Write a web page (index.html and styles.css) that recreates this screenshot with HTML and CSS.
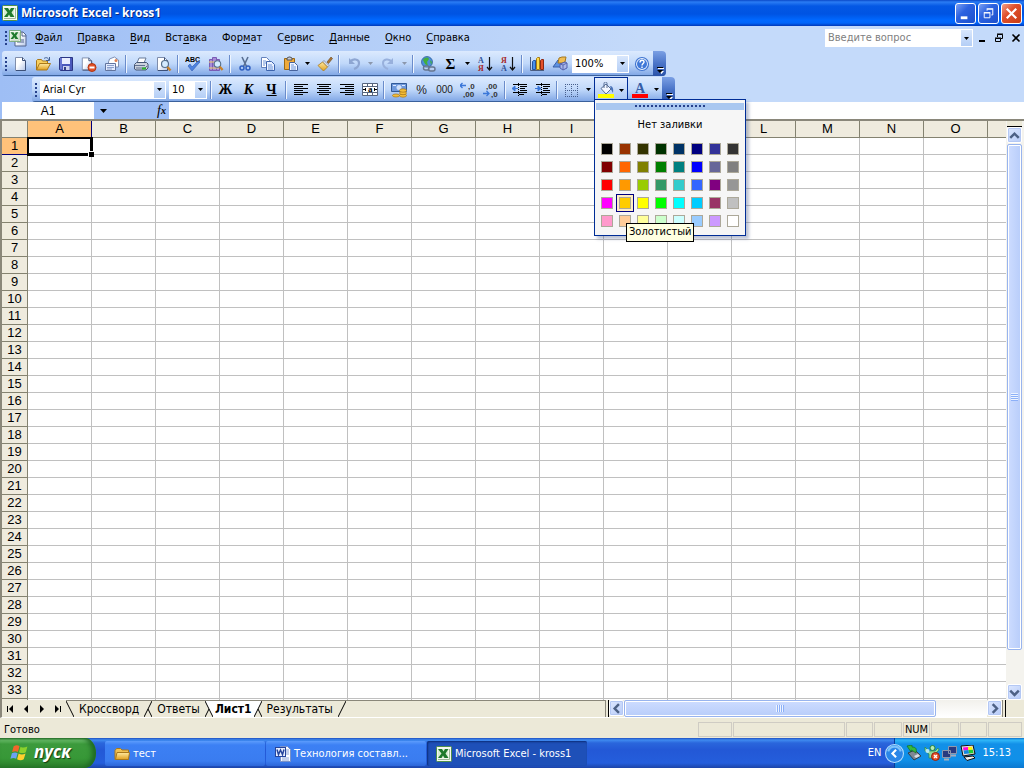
FILE: index.html
```html
<!DOCTYPE html>
<html lang="ru">
<head>
<meta charset="utf-8">
<title>Microsoft Excel - kross1</title>
<link rel="stylesheet" href="styles.css">
</head>
<body>
<svg class="defs" aria-hidden="true">
  <defs>
    <linearGradient id="pageFill" x1="0" y1="0" x2="1" y2="1"><stop offset="0.4" stop-color="#fff"/><stop offset="1" stop-color="#b4c6e8"/></linearGradient>
    <linearGradient id="gold" x1="0" y1="0" x2="0" y2="1"><stop offset="0" stop-color="#ffe9a0"/><stop offset="1" stop-color="#e0a020"/></linearGradient>
  </defs>
  <symbol id="excel" viewBox="0 0 16 16"><rect x="0.5" y="0.5" width="15" height="15" rx="1" fill="#f4faf0" stroke="#4f8f4a"/><path d="M2 13.500H13.500V3" fill="none" stroke="#9cb898"/><rect x="2" y="3" width="10" height="9" fill="#d8ecd2"/><path d="M2 3h4l1.500 2.500L9 3h3.500L9.500 7.500 12.500 12H8.500L7 9.500 5.500 12H2l3.500-4.500z" fill="#1f7a2c"/></symbol>
  <symbol id="page" viewBox="0 0 16 16"><path d="M3.500 1.500h7l3 3v10h-10z" fill="url(#pageFill)" stroke="#7f8dab"/><path d="M10.500 1.500v3h3M13.500 5v9.500H4" fill="none" stroke="#3c5078"/></symbol>
  <symbol id="lens" viewBox="0 0 16 16"><circle cx="9" cy="8" r="3.500" fill="#d4ebff" stroke="#56708c" stroke-width="1.200"/><path d="M11.500 11l3 3.500" stroke="#c98227" stroke-width="2.400"/></symbol>
  <symbol id="folder" viewBox="0 0 16 16"><path d="M1 4.500L2.500 2.500h4L8 4h6.500v9.500H1z" fill="#f0c050" stroke="#a8781c"/><path d="M1.500 13.500L3 6.500h12.500l-1 7z" fill="url(#gold)" stroke="#a8781c"/></symbol>
  <symbol id="down" viewBox="0 0 5 3"><path d="M0 0h5L2.500 3z"/></symbol>
</svg>
<div class="app">
  <header class="title">
    <svg class="i16"><use href="#excel"/></svg>
    <h1>Microsoft Excel - kross1</h1>
    <button class="win" aria-label="Свернуть"><svg viewBox="0 0 20 20"><path d="M5 13h7v3H5z" fill="#fff"/></svg></button>
    <button class="win" aria-label="Восстановить"><svg viewBox="0 0 20 20" fill="none" stroke="#fff"><path d="M8.500 7V5.500h6v6H13M8 5h7" /><path d="M5.500 9.500h6v5h-6zM5 9h7"/></svg></button>
    <button class="win close" aria-label="Закрыть"><svg viewBox="0 0 20 20"><path d="M5 5l10 10M15 5L5 15" stroke="#fff" stroke-width="2.300"/></svg></button>
  </header>

  <nav class="menu">
    <i class="grip"></i>
    <svg class="book" viewBox="0 0 18 18"><path d="M6 3h8l3 3v11H6z" fill="url(#pageFill)" stroke="#52658d"/><path d="M13 3v4h4M8 11h7M8 13h7" fill="none" stroke="#52658d"/><use href="#excel" x="0" y="1" width="12" height="12"/></svg>
    <button><u>Ф</u>айл</button><button><u>П</u>равка</button><button><u>В</u>ид</button><button>Вст<u>а</u>вка</button><button>Фор<u>м</u>ат</button><button>С<u>е</u>рвис</button><button><u>Д</u>анные</button><button><u>О</u>кно</button><button><u>С</u>правка</button>
    <div class="combo ask"><input aria-label="Введите вопрос" placeholder="Введите вопрос"><button aria-label="Список"><svg class="arr"><use href="#down"/></svg></button></div>
    <button class="doc" aria-label="Свернуть книгу"><svg viewBox="0 0 10 10"><path d="M2 7h6v2H2z"/></svg></button>
    <button class="doc" aria-label="Восстановить книгу"><svg viewBox="0 0 10 10" fill="none" stroke="#000"><path d="M3.500 4V1.500h5v4H7M3 1h6M1.500 5.500h5v3h-5zM1 5h6"/></svg></button>
    <button class="doc" aria-label="Закрыть книгу"><svg viewBox="0 0 10 10"><path d="M1.500 1.500l7 7M8.500 1.500l-7 7" stroke="#000" stroke-width="1.600"/></svg></button>
  </nav>

  <div class="row1"><div class="bar" role="toolbar" aria-label="Стандартная">
    <i class="grip"></i>
    <button class="tb" aria-label="Создать"><svg class="i16"><use href="#page"/></svg></button>
    <button class="tb" aria-label="Открыть"><svg viewBox="0 0 16 16"><path d="M1.500 14V4.500l1-1h4l1 1.500h5V8" fill="#f8d060" stroke="#a9781a"/><path d="M1.500 14L4.500 7.500h11L12 14z" fill="url(#gold)" stroke="#a9781a"/><path d="M9 2.500c2-1.500 4-1 5 1.500M14.500 1v3.500H11" fill="none" stroke="#415f94"/></svg></button>
    <button class="tb" aria-label="Сохранить"><svg viewBox="0 0 16 16"><path d="M1.500 2.500l1-1h12v13h-12l-1-1z" fill="#4a58bc" stroke="#2b3684"/><path d="M4 2h8v6H4z" fill="#e8edff"/><path d="M5 10h6.500v4H5z" fill="#cbd3ee"/><path d="M6 11h2v3H6z" fill="#333d84"/><path d="M3 2v11" stroke="#8a96e8"/></svg></button>
    <button class="tb" aria-label="Разрешение"><svg viewBox="0 0 16 16"><use href="#page" x="-2" y="0" width="15" height="16"/><circle cx="11" cy="11.500" r="4" fill="#e25128" stroke="#b03410"/><path d="M8.500 11.500h5" stroke="#fff" stroke-width="2"/></svg></button>
    <button class="tb" aria-label="Сообщение"><svg viewBox="0 0 16 16"><path d="M4.500 6l1-3 5-2 4 3v7h-10z" fill="#fff" stroke="#8090b4"/><circle cx="12" cy="4.500" r="1.500" fill="#e08050"/><path d="M1.500 7.500h10v7h-10z" fill="#e4ecff" stroke="#61749e"/><path d="M3 9.500h7M3 11.500h7M3 13h5" stroke="#8ba0cc"/></svg></button>
    <i class="sep"></i>
    <button class="tb" aria-label="Печать"><svg viewBox="0 0 16 16"><path d="M4 7l2-5h7l-2 5" fill="#fff" stroke="#687a98"/><path d="M1.500 8.500l2-2h10l1.500 1.500v4l-2 2h-10l-1.500-1z" fill="#cbd2de" stroke="#465674"/><path d="M2 9.500h10M3 12h9l2-2" stroke="#627290" fill="none"/><path d="M9 11.500h4v2H9z" fill="#2db52d"/></svg></button>
    <button class="tb" aria-label="Просмотр"><svg viewBox="0 0 16 16"><use href="#page" x="-2" width="16" height="16"/><use href="#lens" x="0" y="0" width="16" height="16"/></svg></button>
    <i class="sep"></i>
    <button class="tb" aria-label="Орфография"><svg viewBox="0 0 16 16"><text x="0" y="6" class="abc">ABC</text><path d="M3 10l4 5 8-9-2-1-6 6-2-3z" fill="#4d82e0" stroke="#305bb0" stroke-width=".6"/></svg></button>
    <button class="tb" aria-label="Справочные материалы"><svg viewBox="0 0 16 16"><path d="M1.500 3.500h3v11h-3zM4.500 1.500h4v13h-4zM8.500 3.500h3v11h-3z" fill="#a78bd8" stroke="#7a5cb4"/><path d="M1 6h10M1 12h10" stroke="#efd26e"/><use href="#lens" x="1" y="0" width="15" height="16"/></svg></button>
    <i class="sep"></i>
    <button class="tb" aria-label="Вырезать"><svg viewBox="0 0 16 16" fill="none"><path d="M5 1l4.500 9.500M11 1L6.500 10.500" stroke="#5a6f92" stroke-width="1.600"/><circle cx="5" cy="12" r="2" stroke="#2f5fc0" stroke-width="1.500"/><circle cx="11" cy="12" r="2" stroke="#2f5fc0" stroke-width="1.500"/></svg></button>
    <button class="tb" aria-label="Копировать"><svg viewBox="0 0 16 16"><path d="M1.500 1.500h5l3 3v7h-8z" fill="#fff" stroke="#6583bd"/><path d="M6.500 5.500h5l3 3v6h-8z" fill="#e8f0ff" stroke="#3d64ad"/><path d="M3 5h3M3 7h3M3 9h2M8 9h4M8 11h5M8 13h5" stroke="#6c94d8"/></svg></button>
    <button class="tb" aria-label="Вставить"><svg viewBox="0 0 16 16"><path d="M1.500 2.500h10v11h-10z" fill="#efaa3c" stroke="#9c6a14"/><path d="M4 4V2l2-1h1l2 1v2z" fill="#c8ccd8" stroke="#555"/><path d="M6.500 6.500h5l3 3v5h-8z" fill="#f2f6ff" stroke="#47639d"/><path d="M8 9h3M8 11h5M8 13h5" stroke="#6c94d8"/></svg></button>
    <button class="dd" aria-label="Параметры вставки"><svg class="arr"><use href="#down"/></svg></button>
    <button class="tb" aria-label="Формат по образцу"><svg viewBox="0 0 16 16"><path d="M10 6l4-5 1.500 1.500-4 5z" fill="#a87436" stroke="#6c4717" stroke-width=".6"/><path d="M7 4.500l5 5-1.500 1.500-5-5z" fill="#d9dde8" stroke="#687087" stroke-width=".6"/><path d="M5.500 6l5 5-4 4L1 9.500z" fill="url(#gold)" stroke="#a97a1b" stroke-width=".8"/></svg></button>
    <i class="sep"></i>
    <button class="tb" aria-label="Отменить"><svg viewBox="0 0 16 16" fill="none" stroke="#8ea6d2"><path d="M4 6c3-4 9-3 9 1 0 3-2 5-5 6" stroke-width="2.200"/><path d="M3 2v6h6z" fill="#8ea6d2" stroke="none"/></svg></button>
    <button class="dd gray" aria-label="Список отмены"><svg class="arr"><use href="#down"/></svg></button>
    <button class="tb" aria-label="Вернуть"><svg viewBox="0 0 16 16" fill="none" stroke="#98b0dc"><path d="M12 6C9 2 3 3 3 7c0 3 2 5 5 6" stroke-width="2"/><path d="M13 2v6H7z" fill="#98b0dc" stroke="none"/></svg></button>
    <button class="dd gray" aria-label="Список возврата"><svg class="arr"><use href="#down"/></svg></button>
    <i class="sep"></i>
    <button class="tb" aria-label="Гиперссылка"><svg viewBox="0 0 16 16"><circle cx="7" cy="6" r="5.500" fill="#4c8fdd" stroke="#28568e" stroke-width=".7"/><path d="M3 4c2-3 5-3 6-1L7 6l1 4-3-2zM10 4l2 2-1 3z" fill="#43ae3c"/><g fill="#dce4f2" fill-opacity=".4" stroke="#66758f" stroke-width="1.400"><rect x="3.500" y="10" width="6" height="4" rx="2"/><rect x="8.500" y="11" width="6.500" height="4" rx="2"/></g></svg></button>
    <button class="tb sigma" aria-label="Автосумма">Σ</button>
    <button class="dd" aria-label="Функции"><svg class="arr"><use href="#down"/></svg></button>
    <button class="tb" aria-label="По возрастанию"><svg viewBox="0 0 16 16"><text x="1" y="7" class="az blue">А</text><text x="1" y="15" class="az red">Я</text><path d="M12.500 1v13M10 11l2.500 3 2.500-3" fill="none" stroke="#111" stroke-width="1.200"/></svg></button>
    <button class="tb" aria-label="По убыванию"><svg viewBox="0 0 16 16"><text x="1" y="7" class="az red">Я</text><text x="1" y="15" class="az blue">А</text><path d="M12.500 1v13M10 11l2.500 3 2.500-3" fill="none" stroke="#111" stroke-width="1.200"/></svg></button>
    <i class="sep"></i>
    <button class="tb" aria-label="Диаграмма"><svg viewBox="0 0 16 16"><path d="M1.500 1v13.500H15" fill="none" stroke="#4a5c80"/><path d="M3.500 5.500l1-1h2v9h-3z" fill="#4a90ea" stroke="#2454a0"/><path d="M7.500 2.500l1-1h2v12h-3z" fill="#ffdc48" stroke="#a77b13"/><path d="M11.500 4.500l1-1h2v10h-3z" fill="#e4512c" stroke="#8c2812"/></svg></button>
    <button class="tb" aria-label="Рисование"><svg viewBox="0 0 16 16"><path d="M1 11L6 4l5 7z" fill="#5e91e0" stroke="#3860a8"/><path d="M7 2l3-1h4l-1 5-3 1H6z" fill="#f0bd54" stroke="#a47820"/><path d="M8 8l5-2 2 1v5l-4 2-3-2z" fill="#a9b7ea" stroke="#515fae"/><path d="M8 8l3 1 4-2M11 9v5" fill="none" stroke="#5b68b0"/></svg></button>
    <div class="combo zoom"><input aria-label="Масштаб" value="100%"><button aria-label="Список масштабов"><svg class="arr"><use href="#down"/></svg></button></div>
    <button class="tb" aria-label="Справка"><svg viewBox="0 0 16 16"><circle cx="8" cy="8" r="6.500" fill="#eef5ff" stroke="#3e73d0" stroke-width="1.200"/><circle cx="8" cy="8" r="5" fill="#3f78d8"/><path d="M6 6.500c0-3 4-3 4-.5 0 1.500-2 1.500-2 3.500M8 10.500v1.500" fill="none" stroke="#fff" stroke-width="1.400"/></svg></button>
    <button class="end" aria-label="Параметры панели"><svg viewBox="0 0 7 7"><path d="M1 1h6v1H1zM2 4h5L4.500 7z" fill="#fff"/><path d="M0 0h6v1H0zM0 3h6L3 6z"/></svg></button>
  </div></div>

  <div class="row2"><div class="bar" role="toolbar" aria-label="Форматирование">
    <i class="grip"></i>
    <div class="combo font"><input aria-label="Шрифт" value="Arial Cyr"><button aria-label="Список шрифтов"><svg class="arr"><use href="#down"/></svg></button></div>
    <div class="combo size"><input aria-label="Размер" value="10"><button aria-label="Список размеров"><svg class="arr"><use href="#down"/></svg></button></div>
    <i class="sep"></i>
    <button class="tb serif">Ж</button><button class="tb serif it">К</button><button class="tb serif un">Ч</button>
    <i class="sep"></i>
    <button class="tb" aria-label="По левому краю"><svg viewBox="0 0 16 16"><path d="M1 2.500h14M1 4.500h9M1 6.500h14M1 8.500h9M1 10.500h14M1 12.500h9" stroke="#000"/></svg></button>
    <button class="tb" aria-label="По центру"><svg viewBox="0 0 16 16"><path d="M1 2.500h14M3 4.500h10M1 6.500h14M3 8.500h10M1 10.500h14M3 12.500h10" stroke="#000"/></svg></button>
    <button class="tb" aria-label="По правому краю"><svg viewBox="0 0 16 16"><path d="M1 2.500h14M6 4.500h9M1 6.500h14M6 8.500h9M1 10.500h14M6 12.500h9" stroke="#000"/></svg></button>
    <button class="tb" aria-label="Объединить"><svg viewBox="0 0 16 16"><path d="M.5 1.500h15v12H.5zM.5 4.500h15M.5 10.500h15M5.500 1.500v3M10.500 1.500v3M5.500 10.500v3M10.500 10.500v3" fill="#fff" stroke="#56657e"/><path d="M1 7.500h3M12 7.500h3M3.500 6v3M12.500 6v3" stroke="#000"/><text x="6" y="10" class="mrg">a</text></svg></button>
    <i class="sep"></i>
    <button class="tb" aria-label="Денежный формат"><svg viewBox="0 0 16 16"><path d="M.5 1.500h15v8H.5z" fill="#6f99dc" stroke="#315998"/><circle cx="8" cy="5.500" r="2.500" fill="#cfe0fb"/><path d="M2 3.500h3M11 3.500h3" stroke="#dce8ff"/><g fill="#f4bd37" stroke="#a67417" stroke-width=".7"><ellipse cx="12" cy="13.500" rx="3.500" ry="1.700"/><ellipse cx="12" cy="11" rx="3.500" ry="1.700"/><ellipse cx="12" cy="8.500" rx="3.500" ry="1.700"/><ellipse cx="5" cy="13.500" rx="3.500" ry="1.500"/></g></svg></button>
    <button class="tb num pct">%</button>
    <button class="tb num">000</button>
    <button class="tb" aria-label="Увеличить разрядность"><svg viewBox="0 0 16 16"><text x="8" y="7" class="dec">,0</text><text x="3" y="15" class="dec">,00</text><path d="M6 3.500H0M2.500 1L0 3.500 2.500 6" stroke="#3a76d8" stroke-width="1.300" fill="none"/></svg></button>
    <button class="tb" aria-label="Уменьшить разрядность"><svg viewBox="0 0 16 16"><text x="3" y="7" class="dec">,00</text><text x="8" y="15" class="dec">,0</text><path d="M0 11.500h6M3.500 9L6 11.500 3.500 14" stroke="#3a76d8" stroke-width="1.300" fill="none"/></svg></button>
    <i class="sep"></i>
    <button class="tb" aria-label="Уменьшить отступ"><svg viewBox="0 0 16 16"><path d="M1 2.500h14M8 4.500h7M8 6.500h5M8 8.500h7M1 10.500h14M7 12.500h5" stroke="#000"/><path d="M6.500 1v14" stroke="#000" stroke-dasharray="1 1"/><path d="M0 6.500L3 4v5zM3 6.500h3" fill="#3a76d8" stroke="#3a76d8"/></svg></button>
    <button class="tb" aria-label="Увеличить отступ"><svg viewBox="0 0 16 16"><path d="M1 2.500h14M8 4.500h7M8 6.500h5M8 8.500h7M1 10.500h14M7 12.500h5" stroke="#000"/><path d="M6.500 1v14" stroke="#000" stroke-dasharray="1 1"/><path d="M6 6.500L3 4v5zM0 6.500h3" fill="#3a76d8" stroke="#3a76d8"/></svg></button>
    <i class="sep"></i>
    <button class="tb" aria-label="Границы"><svg viewBox="0 0 16 16"><path d="M1.500 2v13M7.500 2v13M13.500 2v13M1 2.500h13M1 8.500h13M1 14.500h13" fill="none" stroke="#475f8d" stroke-dasharray="1 1"/></svg></button>
    <button class="dd" aria-label="Список границ"><svg class="arr"><use href="#down"/></svg></button>
    <div class="fill">
      <button class="tb" aria-label="Цвет заливки"><svg viewBox="0 0 16 16"><path d="M0 12h16v4H0z" fill="#ff0"/><path d="M3 6.500L8 2l5 5-5 5z" fill="#f3f7ff" stroke="#566d94"/><path d="M6 6V1.500C6-.5 9-.5 9 1.500V6" fill="none" stroke="#566d94"/><path d="M12 4c3 0 3.500 3 3 7l-2-3.500z" fill="#4a72b8"/></svg></button>
      <button class="dd" aria-label="Палитра"><svg class="arr"><use href="#down"/></svg></button>
      <div class="popup"><div class="drag"><i></i></div><button class="nofill">Нет заливки</button><div class="swatches" id="swatches"></div></div>
    </div>
    <button class="tb" aria-label="Цвет шрифта"><svg viewBox="0 0 16 16"><path d="M0 12h16v4H0z" fill="#f00"/><text x="3" y="11" class="fontA">A</text></svg></button>
    <button class="dd" aria-label="Список цветов"><svg class="arr"><use href="#down"/></svg></button>
    <button class="end" aria-label="Параметры панели"><svg viewBox="0 0 7 7"><path d="M1 1h6v1H1zM2 4h5L4.500 7z" fill="#fff"/><path d="M0 0h6v1H0zM0 3h6L3 6z"/></svg></button>
  </div></div>

  <div class="formula">
    <input class="name" aria-label="Имя ячейки" value="A1">
    <button class="drop" aria-label="Список имён"><svg viewBox="0 0 7 4"><path d="M0 0h7L3.500 4z"/></svg></button>
    <button class="fx"><i>f</i>x</button>
    <input class="fline" aria-label="Строка формул">
  </div>

  <main class="work">
    <div class="sheet"><table id="grid" aria-label="Лист1"></table></div>
    <div class="vscroll">
      <i class="split"></i>
      <button class="sb" aria-label="Вверх"><svg viewBox="0 0 9 9"><path d="M1 6.500L4.500 3 8 6.500"/></svg></button>
      <div class="thumb"><i></i></div>
      <button class="sb" aria-label="Вниз"><svg viewBox="0 0 9 9"><path d="M1 3l3.500 3.500L8 3"/></svg></button>
    </div>
  </main>

  <div class="tabs">
    <div class="tabnav">
      <button aria-label="Первый лист"><svg viewBox="0 0 8 8"><path d="M1 1h1v6H1zM7 0v8L3 4z"/></svg></button><button aria-label="Предыдущий"><svg viewBox="0 0 8 8"><path d="M6 0v8L2 4z"/></svg></button><button aria-label="Следующий"><svg viewBox="0 0 8 8"><path d="M2 0v8l4-4z"/></svg></button><button aria-label="Последний лист"><svg viewBox="0 0 8 8"><path d="M1 0v8l4-4zM6 1h1v6H6z"/></svg></button>
    </div>
    <div class="tablist">
      <svg class="edge" viewBox="0 0 8 16"><path d="M0 0l8 16"/></svg><button>Кроссворд</button>
      <svg class="edge" viewBox="0 0 8 16"><path d="M8 0L0 16M4 8l4 8"/></svg><button>Ответы</button>
      <svg class="edge" viewBox="0 0 8 16"><path class="bg" d="M0 0h8v16z"/><path d="M0 0l8 16M4 8L0 16"/></svg><button class="on">Лист1</button>
      <svg class="edge" viewBox="0 0 8 16"><path class="bg" d="M0 0h8L0 16z"/><path d="M8 0L0 16M4 8l4 8"/></svg><button>Результаты</button>
      <svg class="edge" viewBox="0 0 8 16"><path d="M8 0L0 16"/></svg>
    </div>
    <div class="hscroll">
      <i class="split"></i>
      <button class="sb" aria-label="Влево"><svg viewBox="0 0 9 9"><path d="M6.500 1L3 4.500 6.500 8"/></svg></button>
      <div class="track"><div class="thumb"><i></i></div></div>
      <button class="sb" aria-label="Вправо"><svg viewBox="0 0 9 9"><path d="M3 1l3.500 3.500L3 8"/></svg></button>
      <i class="split"></i>
    </div>
  </div>

  <footer class="status"><span class="ready">Готово</span><i class="p34"></i><i class="p112"></i><i class="p26"></i><i class="p30"></i><i class="p26">NUM</i><i class="p30"></i><i class="p26"></i><i class="p34"></i></footer>

  <div class="task">
    <button class="start"><svg viewBox="0 0 18 18"><path d="M3.500 3C6 1.500 7.500 2 9 3L7.500 8.500C6 7.500 4.500 7.500 2 8.500z" fill="#f2662b"/><path d="M10 3.500c2 1.200 4 1 6.500-.3L15 8.700c-2 1.200-4.500 1-6.500 0z" fill="#8bd12c"/><path d="M1.800 9.800C4 8.500 5.800 8.800 7.200 9.700L5.800 15C4 14 2.500 14 .4 15z" fill="#6ba2f4"/><path d="M8.200 10c2 1.200 4 1.200 6.500 0L13 15.400c-2 1.200-4.300 1-6.300 0z" fill="#ffd02e"/></svg>пуск</button>
    <div class="apps">
      <button><svg class="i16"><use href="#folder"/></svg><span>тест</span></button>
      <button><svg viewBox="0 0 16 16"><path d="M5.500.5h7l3 3v12h-10z" fill="#f8fbff" stroke="#7891c8"/><path d="M10 4h4M10 6h4M10 8h4M7 12h7M7 14h7" stroke="#8aa2d6"/><rect x=".5" y="1.500" width="10" height="9" fill="#e6eeff" stroke="#24449c"/><path d="M2 3.500l1.500 5L5.500 4l2 4.500L9 3.500" fill="none" stroke="#24449c" stroke-width="1.500"/></svg><span>Технология составл...</span></button>
      <button class="on"><svg class="i16"><use href="#excel"/></svg><span>Microsoft Excel - kross1</span></button>
    </div>
    <button class="lang">EN</button>
    <div class="tray">
      <button class="hide" aria-label="Скрыть значки"><svg viewBox="0 0 18 18"><circle cx="9" cy="9" r="8.500" fill="#2a86e8" stroke="#b6defc"/><path d="M3 7c2-6 10-6 12 0" fill="none" stroke="#7cc2fa" stroke-width="2"/><path d="M10.500 5.500L7 9l3.500 3.500" fill="none" stroke="#fff" stroke-width="2"/></svg></button>
      <svg viewBox="0 0 16 16"><path d="M2 8l7-3 6 6-7 4z" fill="#7e8894" stroke="#33404c"/><path d="M8 11l4-2 2 2-4 2z" fill="#d9dde2"/><path d="M1 1l5-1v2c4 0 5 2 4 6L7 6 5 5v2z" fill="#35b83c" stroke="#146c22" stroke-width=".7"/></svg>
      <svg viewBox="0 0 16 16"><circle cx="8.500" cy="3" r="2.500" fill="#b4ecb4" stroke="#2a7f3c"/><path d="M1 2l4 4h6l3-3 1 2-4 4v4H5V9L1 6z" fill="#8fdc9c" stroke="#2f8a48" stroke-width=".7"/><circle cx="3.500" cy="6" r="2" fill="#b8e8f6"/><circle cx="11.500" cy="11.500" r="4" fill="#e8502a" stroke="#8f2410"/><path d="M10 10l3 3M13 10l-3 3" stroke="#fff" stroke-width="1.400"/></svg>
      <svg viewBox="0 0 16 16"><g fill="#283a80" stroke="#8e98ac"><path d="M6.500 1.500h8v7h-8zM.5 5.500h8v7h-8z"/></g><path d="M2 14.500h5M9 10.500h5" stroke="#a4aebe" stroke-width="2"/></svg>
      <svg viewBox="0 0 16 16"><path d="M1 1l12-1 2 9-12 2z" fill="#e0e0e0" stroke="#111"/><path d="M3 2.500l5-.5.500 3-5 .5z" fill="#f0d"/><path d="M8 2l4-.3.700 3-4.200.3z" fill="#fff200"/><path d="M3.500 5.500l5-.5.700 3.500-5 .6z" fill="#18d"/><path d="M8.500 5l4.300-.3.700 3.300-4.300.5z" fill="#2c3"/><path d="M4 12l9-1 2 2-8 2.500z" fill="#eee" stroke="#111"/></svg>
      <time>15:13</time>
    </div>
  </div>
</div>
<script src="sheet.js"></script>
</body>
</html>
```
FILE: sheet.js
```js
const columns = 'ABCDEFGHIJKLMNO'.split('').concat('');
const visibleRows = 33;
const head = '<tr><th class="corner"></th>' + columns.map((c, i) => `<th${i ? '' : ' class="sel"'}>${c}</th>`).join('') + '</tr>';
let rows = '';
for (let r = 1; r <= visibleRows + 1; r++) {
  rows += `<tr><th${r === 1 ? ' class="sel"' : ''}>${r <= visibleRows ? r : ''}</th>` +
    columns.map((c, i) => (r === 1 && i === 0 ? '<td class="active"></td>' : '<td></td>')).join('') + '</tr>';
}
document.getElementById('grid').innerHTML = `<thead>${head}</thead><tbody>${rows}</tbody>`;

const palette = [
  '#000000', '#993300', '#333300', '#003300', '#003366', '#000080', '#333399', '#333333',
  '#800000', '#ff6600', '#808000', '#008000', '#008080', '#0000ff', '#666699', '#808080',
  '#ff0000', '#ff9900', '#99cc00', '#339966', '#33cccc', '#3366ff', '#800080', '#969696',
  '#ff00ff', '#ffcc00', '#ffff00', '#00ff00', '#00ffff', '#00ccff', '#993366', '#c0c0c0',
  '#ff99cc', '#ffcc99', '#ffff99', '#ccffcc', '#ccffff', '#99ccff', '#cc99ff', '#ffffff'
];
document.getElementById('swatches').innerHTML = palette.map(c =>
  c === '#ffcc00'
    ? `<button class="hot" aria-label="Золотистый"><i style="background:${c}"></i><span class="tip">Золотистый</span></button>`
    : `<button aria-label="${c}"><i style="background:${c}"></i></button>`).join('');
```
FILE: styles.css
```css
* { box-sizing: border-box; }
html, body { height: 100%; margin: 0; }
body { font: 11px/14px "DejaVu Sans Condensed", "Noto Sans", sans-serif; color: #000; }
button, input { font: inherit; color: inherit; background: none; border: 0; padding: 0; margin: 0; min-width: 0; border-radius: 0; }
button { display: flex; align-items: center; justify-content: center; }
svg { display: block; flex: none; }
.defs { position: absolute; width: 0; height: 0; }
.app { height: 100vh; display: flex; flex-direction: column; overflow: hidden; background: #ece9d8; }
.app > * { flex: none; }
.i16 { width: 16px; height: 16px; }

.title { height: 26px; display: flex; align-items: center; gap: 2px; padding: 0 2px; background: linear-gradient(#0a49c8 0, #2a7cf4 2px, #0458e4 6px, #0054e3 14px, #0068ff 20px, #0065fa 23px, #0038b8 26px); }
.title h1 { flex: 1; margin: 0; padding-left: 1px; font: bold 12px/16px "Open Sans", sans-serif; color: #fff; text-shadow: 1px 1px #0a2a80; }
.win { width: 21px; height: 21px; border: 1px solid #fff; border-radius: 3px; background: linear-gradient(135deg, #7ba0f4, #2c62e0 40%, #1c50cc); }
.win svg { width: 19px; height: 19px; }
.win.close { background: linear-gradient(135deg, #f0a088, #e0502c 40%, #c83c14); }

.menu { height: 25px; display: flex; gap: 1px; align-items: center; padding: 0 0 1px 5px; background: linear-gradient(90deg, #9ebef5, #c4dafa 640px); }
.menu > button { height: 20px; padding: 0 7px; white-space: nowrap; }
.menu u { text-underline-offset: 2px; }
.book { width: 18px; height: 18px; }
.grip { flex: none; width: 3px; height: 14px; background: repeating-linear-gradient(#27418c 0 2px, transparent 2px 4px); background-size: 2px 100%; background-repeat: no-repeat; }
.combo { display: flex; flex: none; height: 18px; background: #fff; border: 1px solid #fff; }
.combo input { flex: 1; padding: 0 2px; outline: 0; }
.combo button { width: 11px; background: linear-gradient(#d8e6fc, #b4cef6); }
.arr { width: 5px; height: 3px; fill: #000; }
.combo.ask { width: 148px; margin-left: auto; }
.ask input::placeholder { color: #808080; opacity: 1; }
.menu > .doc { width: 16px; padding: 0; }
.doc svg { width: 10px; height: 10px; }

.row1, .row2 { display: flex; background: linear-gradient(90deg, #9ebef5, #c4dafa 640px); }
.row1 { padding: 0 0 1px 2px; }
.row2 { padding: 0 0 0 32px; }
.bar { display: flex; align-items: center; height: 25px; border-radius: 3px 4px 4px 3px; background: linear-gradient(#dceafe, #c0d8fa 50%, #82a8e6 96%, #3b619c 96%); }
.bar > .grip { margin: 0 0 0 3px; }
.row2 .bar > .grip { margin-right: 2px; }
.tb { width: 23px; height: 23px; flex: none; }
.tb svg { width: 16px; height: 16px; }
.dd { width: 11px; height: 23px; flex: none; }
.gray .arr { fill: #8b97ac; }
.sep { flex: none; width: 6px; height: 18px; background: linear-gradient(90deg, transparent 2px, #6a8ccb 2px 3px, #eef5ff 3px 4px, transparent 4px); }
.end { width: 13px; height: 25px; align-items: flex-end; padding: 0 0 2px 1px; border-radius: 0 4px 4px 0; background: linear-gradient(#7ba0e4, #4a74c8 50%, #2a52a8); }
.end svg { width: 7px; height: 7px; }
.sigma { font: bold 15px/18px "Liberation Serif", serif; }
.serif { font: bold 14px/18px "Liberation Serif", serif; }
.it { font-style: italic; }
.un { text-decoration: underline; }
.num { font: 10px/14px "Liberation Sans", sans-serif; color: #222; }
.pct { font-size: 12px; }
.abc { font: bold 7px "Liberation Sans", sans-serif; }
.az { font: bold 8px "Liberation Serif", serif; }
.blue { fill: #304f96; }
.red { fill: #a82828; }
.mrg { font: bold 9px "Liberation Serif", serif; }
.dec { font: bold 8px "Liberation Sans", sans-serif; fill: #333; }
.fontA { font: bold 14px "Liberation Serif", serif; fill: #365da6; }
.zoom { width: 57px; margin: 0 1px; }
.font { width: 126px; }
.size { width: 38px; margin: 0 1px 0 3px; }

.fill { position: relative; display: flex; align-items: center; height: 25px; border: 1px solid #002d96; border-bottom: 0; background: linear-gradient(#e4eefe, #a4c4f4); }
.fill > .tb { width: 21px; }
.popup { position: absolute; z-index: 5; top: 21px; left: -1px; width: 152px; padding: 3px 1px 5px; border: 1px solid #002d96; background: #f6f6f6; box-shadow: 3px 3px 3px rgba(60, 80, 130, .35); }
.drag { display: flex; justify-content: center; padding: 2px 0; background: #a9c7f0; }
.drag i { width: 71px; height: 3px; background: repeating-linear-gradient(90deg, #27418c 0 2px, transparent 2px 4px); background-size: 100% 2px; background-repeat: no-repeat; }
.nofill { width: 100%; height: 30px; }
.swatches { display: grid; grid-template-columns: repeat(8, 18px); justify-content: center; }
.swatches button { position: relative; width: 18px; height: 18px; }
.swatches i { width: 12px; height: 12px; border: 1px solid #aca899; }
.swatches .hot { border: 1px solid #000080; background: #ffeec2; }
.tip { position: absolute; left: 9px; top: 28px; z-index: 6; padding: 1px 2px 2px; border: 1px solid #000; background: #ffffe1; white-space: nowrap; }

.formula { display: flex; height: 17px; padding-left: 2px; background: #9ebef5; }
.formula input { background: #fff; outline: 0; }
.name { width: 92px; text-align: center; font: 12px/16px "Liberation Sans", sans-serif; }
.drop { width: 18px; }
.drop svg { width: 7px; height: 4px; }
.fx { width: 57px; justify-content: flex-end; padding-right: 3px; font: italic bold 10px/16px "Liberation Serif", serif; }
.fx i { font-size: 14px; font-weight: normal; }
.fline { flex: 1; }

.app > .work { flex: 1 1 0; min-height: 0; display: flex; border-top: 2px solid #8a877a; border-left: 2px solid #8a877a; background: #ece9d8; }
.sheet { flex: 1; min-width: 0; overflow: hidden; background: #fff; }
#grid { table-layout: fixed; width: 1050px; border-collapse: separate; border-spacing: 0; font: 13px/16px "Liberation Sans", sans-serif; }
#grid th { height: 17px; padding: 0; font-weight: normal; text-align: center; background: #efebde; border-right: 1px solid #848270; border-bottom: 1px solid #848270; }
#grid .corner { width: 26px; }
#grid td { height: 17px; padding: 0; border-right: 1px solid #c0c0c0; border-bottom: 1px solid #c0c0c0; }
#grid th.sel { background: #ffc27a; border-color: #00007c; }
#grid td.active { position: relative; border-color: #000; box-shadow: inset 0 0 0 1px #000, 0 0 0 1px #000; }
.active::after { content: ""; position: absolute; right: -3px; bottom: -3px; width: 5px; height: 5px; border: solid #fff; border-width: 1px 0 0 1px; background: #000; }

.vscroll { width: 18px; display: flex; flex-direction: column; padding: 0 2px 0 1px; background: #f4f3ee; }
.vscroll .split { height: 6px; border-bottom: 1px solid #000; background: #ece9d8; }
.sb { width: 15px; height: 16px; flex: none; border: 1px solid #fff; border-radius: 2px; background: linear-gradient(135deg, #dce7ff, #b8ccf8); box-shadow: inset 0 0 0 1px #b4c8f4; }
.sb svg { width: 11px; height: 11px; fill: none; stroke: #4d6185; stroke-width: 2; }
.thumb { display: flex; align-items: center; justify-content: center; border: 1px solid #98b4ee; border-radius: 2px; box-shadow: inset 0 0 0 1px #fff; background: #c6d6fc; }
.vscroll .thumb { flex: 1; margin: 1px 0 34px; background: linear-gradient(90deg, #cddcff, #b8cdfa); }
.vscroll .thumb i { width: 7px; height: 8px; background: repeating-linear-gradient(#eef4ff 0 1px, #8cb0f8 1px 2px); }

.tabs { height: 18px; display: flex; border-left: 2px solid #8a877a; border-bottom: 1px solid #fff; font-size: 12px; line-height: 16px; }
.tabnav { display: flex; width: 64px; }
.tabnav button { flex: 1; }
.tabnav svg { width: 8px; height: 8px; }
.tablist { flex: 1; display: flex; border-top: 1px solid #8a877a; }
.tablist button { padding: 0 5px; white-space: nowrap; }
.tablist .on { background: #fff; font-weight: bold; padding: 0 2px; }
.edge { width: 8px; height: 16px; fill: none; stroke: #000; stroke-width: 1; }
.edge .bg { fill: #fff; stroke: none; }
.hscroll { flex: none; width: 41%; display: flex; padding-right: 18px; }
.hscroll .split { flex: none; width: 4px; border: solid; border-width: 0 1px; border-color: #fff #000 #fff #8a877a; }
.track { flex: 1; display: flex; background: linear-gradient(#f2f1ec, #fff); }
.hscroll .thumb { width: 86%; background: linear-gradient(#cddcff, #b8cdfa); }
.hscroll .thumb i { width: 8px; height: 7px; background: repeating-linear-gradient(90deg, #eef4ff 0 1px, #8cb0f8 1px 2px); }

.status { height: 20px; display: flex; align-items: center; gap: 1px; padding: 3px 2px 0 4px; }
.ready { flex: 1; }
.status i { height: 15px; border: 1px solid #cfccc4; font-style: normal; text-align: center; line-height: 14px; }
.p34 { width: 34px; } .p112 { width: 112px; } .p26 { width: 27px; } .p30 { width: 28px; }

.task { height: 30px; display: flex; color: #fff; background: linear-gradient(#1f4fc0 0, #3f8bf0 2px, #2a66dc 5px, #2358d6 12px, #245edc 25px, #1c44a8 30px); }
.start { width: 96px; height: 30px; justify-content: flex-start; gap: 5px; padding: 0 0 2px 10px; border-radius: 0 12px 12px 0 / 0 16px 16px 0; background: linear-gradient(#2d6f2d 0, #6cc06c 2px, #3c9a3c 6px, #379837 20px, #2a7c2a 30px); box-shadow: inset -4px 0 5px #1f6a24; font: italic bold 17px/20px "Open Sans", sans-serif; text-shadow: 1px 1px 1px #143c14; }
.start svg { width: 19px; height: 19px; }
.apps { flex: 1; display: flex; gap: 1px; padding: 3px 0 2px 9px; min-width: 0; }
.apps button { flex: 0 1 160px; justify-content: flex-start; gap: 3px; padding: 0 9px; border-radius: 2px; background: linear-gradient(#5c9cfc, #3c80f4 4px, #3a7cf0 20px, #2c66d8); white-space: nowrap; }
.apps svg { width: 16px; height: 16px; }
.apps .on { background: #1e50b8; box-shadow: inset 1px 1px 2px #0c2c78; }
.lang { padding: 0 13px 0 6px; }
.tray { display: flex; align-items: center; gap: 2px; padding-right: 13px; background: linear-gradient(#0c70cc 0, #30b8f8 2px, #1290e8 6px, #1090e8 22px, #0c78d0 30px); border-left: 1px solid #0a3c98; }
.tray > svg { width: 16px; height: 16px; }
.hide { margin-left: -10px; }
.hide svg { width: 19px; height: 19px; }
.tray time { padding-left: 4px; }
```
